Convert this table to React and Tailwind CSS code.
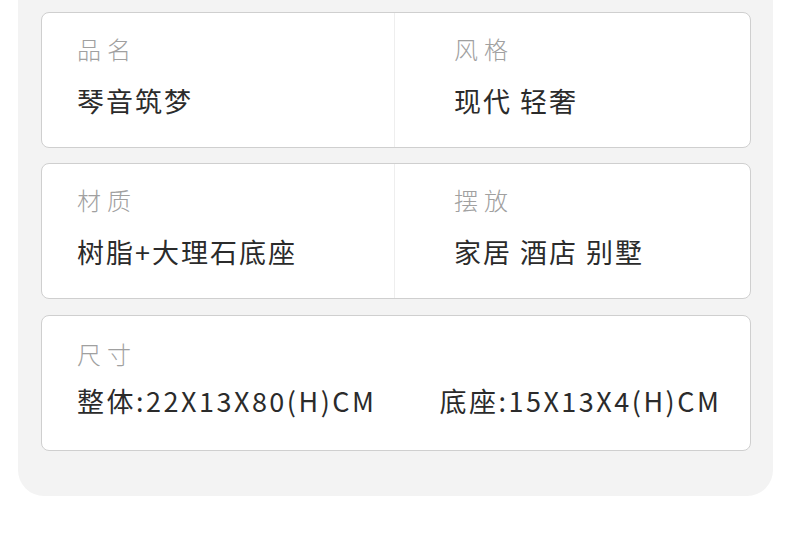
export default function App() {
  const font = { fontFamily: '"Noto Sans CJK SC", "Noto Sans", sans-serif' };
  const Label = ({ children }) => (
    <div className="text-[24px] leading-[36px] tracking-[6px] text-[#a0a0a0] font-light">{children}</div>
  );
  const Value = ({ children }) => (
    <div className="mt-[16px] text-[27px] leading-[36px] tracking-[2px] text-[#2b2b2b]">{children}</div>
  );
  return (
    <div className="w-[790px] h-[552px] bg-white" style={font}>
      <div className="ml-[18px] w-[755px] h-[496px] bg-[#f3f3f3] rounded-b-[26px] pl-[23px] pr-[22px] pt-[12px] flex flex-col gap-[15px]">
        <div className="h-[136px] flex bg-white border border-[#cfcfcf] rounded-[8px]">
          <div className="w-[353px] border-r border-[#eeeeee] pl-[35px] pt-[18px]">
            <Label>品名</Label>
            <Value>琴音筑梦</Value>
          </div>
          <div className="flex-1 pl-[59px] pt-[18px]">
            <Label>风格</Label>
            <Value>现代 轻奢</Value>
          </div>
        </div>
        <div className="h-[136px] flex bg-white border border-[#cfcfcf] rounded-[8px]">
          <div className="w-[353px] border-r border-[#eeeeee] pl-[35px] pt-[18px]">
            <Label>材质</Label>
            <Value>树脂+大理石底座</Value>
          </div>
          <div className="flex-1 pl-[59px] pt-[18px]">
            <Label>摆放</Label>
            <Value>家居 酒店 别墅</Value>
          </div>
        </div>
        <div className="mt-[1px] h-[136px] bg-white border border-[#cfcfcf] rounded-[8px] pl-[35px] pt-[20px]">
          <Label>尺寸</Label>
          <div className="mt-[11px] flex gap-[63px] text-[27px] leading-[36px] tracking-[2.5px] text-[#2b2b2b]">
            <span>整体:22X13X80(H)CM</span>
            <span>底座:15X13X4(H)CM</span>
          </div>
        </div>
      </div>
    </div>
  );
}
